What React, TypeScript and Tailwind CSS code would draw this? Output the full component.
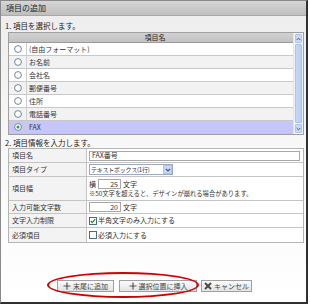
import React from 'react';

const items = ['(自由フォーマット)', 'お名前', '会社名', '郵便番号', '住所', '電話番号', 'FAX'];

// XP-ish radio button
const Radio = ({ checked = false }: { checked?: boolean }) => (
  <svg width="8" height="8" viewBox="0 0 8 8">
    <circle cx="4" cy="4" r="3.4" fill="#fff" stroke="#5a7a9a" strokeWidth="0.9" />
    {checked && <circle cx="4" cy="4" r="1.5" fill="#3c9a3c" />}
  </svg>
);

const Check = ({ checked = false }: { checked?: boolean }) => (
  <svg width="8" height="8" viewBox="0 0 8 8">
    <rect x="0.5" y="0.5" width="7" height="7" fill="#fff" stroke="#3a5a7a" strokeWidth="0.9" />
    {checked && <path d="M1.8 4 L3.3 5.6 L6.2 2.2" fill="none" stroke="#2a8a2a" strokeWidth="1.3" />}
  </svg>
);

const Btn = ({ icon, label, w }: { icon: 'plus' | 'x'; label: string; w: string }) => (
  <div className={`${w} h-[12px] flex items-center justify-center gap-[2px] border border-[#a0a0a0] bg-gradient-to-b from-[#fbfbfb] to-[#e2e2e2] text-[7px] leading-none text-[#444] whitespace-nowrap`}>
    {icon === 'plus' ? (
      <svg width="8" height="8" viewBox="0 0 8 8">
        <path d="M4 0.5 V7.5 M0.5 4 H7.5" stroke="#555" strokeWidth="1.2" />
      </svg>
    ) : (
      <svg width="8" height="8" viewBox="0 0 8 8">
        <path d="M1 1 L7 7 M7 1 L1 7" stroke="#444" strokeWidth="1.8" />
      </svg>
    )}
    <span>{label}</span>
  </div>
);

const Row = ({ label, h, children }: { label: string; h: string; children: React.ReactNode }) => (
  <div className={`flex ${h} border-b border-[#c4c4c4] last:border-b-0`}>
    <div className="w-[78px] shrink-0 bg-[#f3f3f3] border-r border-[#c4c4c4] flex items-center pl-[3px] text-[7px] text-[#333]">
      {label}
    </div>
    <div className="flex-1 bg-white flex flex-col justify-center pl-[2px] text-[7px] text-[#333]">{children}</div>
  </div>
);

export default function App() {
  return (
    <div className="w-[310px] h-[306px] bg-white" style={{ fontFamily: '"Noto Sans CJK JP", "Liberation Sans", sans-serif' }}>
      <div className="w-[308px] h-[304px] border-l border-t border-[#8a8a8a] border-r-2 border-b-2 border-r-[#303030] border-b-[#303030] flex flex-col bg-gradient-to-b from-[#ededed] via-[#f8f8f8] to-white">
        {/* Title bar */}
        <div className="h-[15px] shrink-0 bg-gradient-to-b from-[#d6d6d6] to-[#bebebe] border-b border-[#a8a8a8] pl-[5px] text-[8px] leading-[14px] text-[#222]">
          項目の追加
        </div>

        <div className="h-[16px] shrink-0 flex items-end pb-[1px] pl-[4px] text-[7.5px] text-[#222]">1. 項目を選択します。</div>

        {/* List box */}
        <div className="ml-[7px] w-[296px] h-[103px] shrink-0 border border-[#a0a0a0] bg-white flex overflow-hidden">
          <div className="flex-1 flex flex-col">
            <div className="h-[10px] shrink-0 bg-gradient-to-b from-[#d2d2d2] to-[#c2c2c2] border-b border-[#9a9a9a] flex items-center justify-center text-[7px] text-[#222] pl-[8px]">
              項目名
            </div>
            {items.map((it, i) => (
              <div
                key={it}
                className={`h-[13px] shrink-0 flex border-b border-[#c8c8c8] ${
                  it === 'FAX' ? 'bg-[#c6c6fa]' : i % 2 === 1 ? 'bg-[#f2f2f2]' : 'bg-white'
                }`}
              >
                <div className="w-[18px] shrink-0 border-r border-[#cfcfcf] flex items-center justify-center">
                  <Radio checked={it === 'FAX'} />
                </div>
                <div className="flex items-center pl-[2px] text-[7px] text-[#333]">{it}</div>
              </div>
            ))}
          </div>
          {/* scrollbar */}
          <div className="w-[10px] shrink-0 bg-[#eef3fc] flex flex-col border-l border-[#e0e6f0]">
            <div className="h-[9px] m-[1px] rounded-[1px] bg-[#c8d8f6] border border-[#b0c4ec] flex items-center justify-center">
              <svg width="6" height="4" viewBox="0 0 6 4">
                <path d="M0.8 3.2 L3 1 L5.2 3.2" fill="none" stroke="#3a4e8a" strokeWidth="1.1" />
              </svg>
            </div>
            <div className="flex-1 mx-[1px] rounded-[1px] bg-gradient-to-r from-[#c9d8f7] to-[#bacdf3] border border-[#aec2ec]" />
            <div className="h-[9px] m-[1px] rounded-[1px] bg-[#c8d8f6] border border-[#b0c4ec] flex items-center justify-center">
              <svg width="6" height="4" viewBox="0 0 6 4">
                <path d="M0.8 0.8 L3 3 L5.2 0.8" fill="none" stroke="#3a4e8a" strokeWidth="1.1" />
              </svg>
            </div>
          </div>
        </div>

        <div className="h-[13px] shrink-0 flex items-end pl-[4px] text-[7.5px] text-[#222]">2. 項目情報を入力します。</div>

        {/* Form table */}
        <div className="ml-[7px] w-[296px] shrink-0 border border-[#b4b4b4] flex flex-col">
          <Row label="項目名" h="h-[14px]">
            <div className="w-[211px] h-[10px] border border-[#a8a8a8] bg-white flex items-center pl-[2px] leading-none">FAX番号</div>
          </Row>
          <Row label="項目タイプ" h="h-[14px]">
            <div className="w-[84px] h-[11px] border border-[#9aa8c0] bg-white flex items-center leading-none">
              <span className="flex-1 pl-[1px] text-[6px] tracking-[-0.2px] whitespace-nowrap">テキストボックス(1行)</span>
              <div className="w-[9px] h-[9px] shrink-0 bg-[#c8d8f6] border border-[#b0c4ec] flex items-center justify-center">
                <svg width="6" height="4" viewBox="0 0 6 4">
                  <path d="M0.8 0.8 L3 3 L5.2 0.8" fill="none" stroke="#3a4e8a" strokeWidth="1.1" />
                </svg>
              </div>
            </div>
          </Row>
          <Row label="項目幅" h="h-[24px]">
            <div className="flex items-center gap-[2px] leading-none">
              <span>横</span>
              <div className="w-[23px] h-[10px] border border-[#a8a8a8] bg-white flex items-center justify-end pr-[2px]">25</div>
              <span>文字</span>
            </div>
            <div className="mt-[2px] text-[6.3px] leading-none">※50文字を超えると、デザインが崩れる場合があります。</div>
          </Row>
          <Row label="入力可能文字数" h="h-[13px]">
            <div className="flex items-center gap-[2px] leading-none">
              <div className="w-[32px] h-[10px] border border-[#a8a8a8] bg-white flex items-center justify-end pr-[2px]">20</div>
              <span>文字</span>
            </div>
          </Row>
          <Row label="文字入力制限" h="h-[14px]">
            <div className="flex items-center gap-[1px] leading-none">
              <Check checked />
              <span>半角文字のみ入力にする</span>
            </div>
          </Row>
          <Row label="必須項目" h="h-[14px]">
            <div className="flex items-center gap-[1px] leading-none">
              <Check />
              <span>必須入力にする</span>
            </div>
          </Row>
        </div>

        {/* Buttons */}
        <div className="mt-auto mb-[10px] flex justify-center items-center gap-[4px] pl-[2px]">
          <div className="relative flex items-center gap-[5px]">
            {/* red annotation ellipse */}
            <div className="absolute left-[-10px] right-[-2px] top-[-8px] bottom-[-6px] rounded-[50%] border-2 border-[#d00000]" />
            <Btn icon="plus" label="末尾に追加" w="w-[57px]" />
            <Btn icon="plus" label="選択位置に挿入" w="w-[78px]" />
          </div>
          <Btn icon="x" label="キャンセル" w="w-[51px]" />
        </div>
      </div>
    </div>
  );
}
